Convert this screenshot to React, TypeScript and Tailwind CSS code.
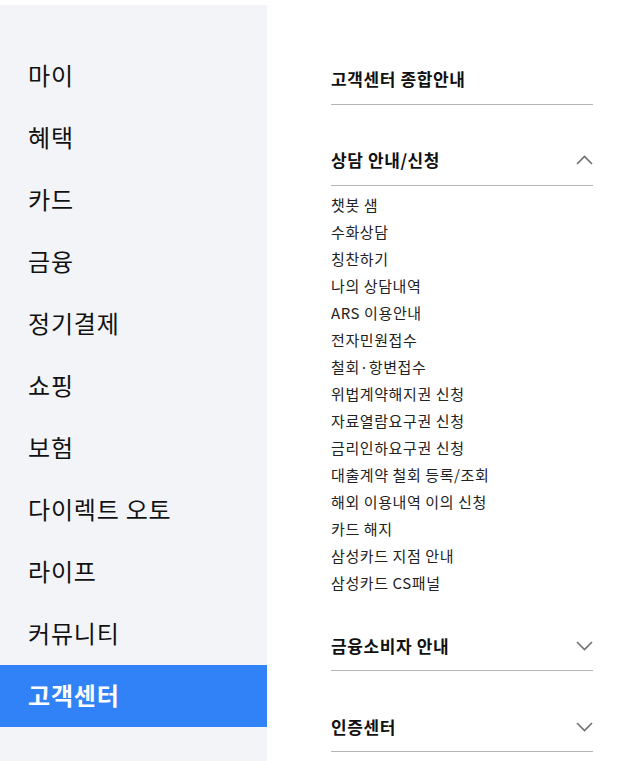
import React from "react";

const mainMenu = [
  "마이",
  "혜택",
  "카드",
  "금융",
  "정기결제",
  "쇼핑",
  "보험",
  "다이렉트 오토",
  "라이프",
  "커뮤니티",
  "고객센터",
];

const counselItems = [
  "챗봇 샘",
  "수화상담",
  "칭찬하기",
  "나의 상담내역",
  "ARS 이용안내",
  "전자민원접수",
  "철회·항변접수",
  "위법계약해지권 신청",
  "자료열람요구권 신청",
  "금리인하요구권 신청",
  "대출계약 철회 등록/조회",
  "해외 이용내역 이의 신청",
  "카드 해지",
  "삼성카드 지점 안내",
  "삼성카드 CS패널",
];

const Chevron = ({ up }: { up?: boolean }) => (
  <svg width="17" height="10" viewBox="0 0 17 10" fill="none">
    <path
      d={up ? "M1 9 L8.5 1.5 L16 9" : "M1 1 L8.5 8.5 L16 1"}
      stroke="#707070"
      strokeWidth="1.6"
    />
  </svg>
);

const App: React.FC = () => {
  const active = "고객센터";

  return (
    <div
      className="flex w-[617px] h-[761px] overflow-hidden bg-white text-[#111]"
      style={{ fontFamily: '"Noto Sans CJK KR", "Noto Sans", sans-serif' }}
    >
      {/* ── Left main menu ── */}
      <aside className="w-[267px] shrink-0 mt-[5px] bg-[#f2f4f8] pt-[40px] pb-[60px]">
        <ul>
          {mainMenu.map(m => (
            <li
              key={m}
              className={`h-[62px] flex items-center pl-[28px] pb-[2px] text-[24px] tracking-[0.8px] leading-none
                ${m === active ? "bg-[#3182f6] text-white font-bold" : "text-[#111]"}`}
            >
              {m}
            </li>
          ))}
        </ul>
      </aside>

      {/* ── Right sub menu ── */}
      <div className="w-[262px] ml-[64px] pt-[54px]">
        <div className="h-[51px] flex items-center border-b border-[#b5b5b5] text-[17px] font-bold tracking-[0.6px]">
          고객센터 종합안내
        </div>

        <div className="mt-[30px] h-[51px] flex items-center justify-between border-b border-[#b5b5b5] text-[17px] font-bold tracking-[0.6px]">
          <span>상담 안내/신청</span>
          <Chevron up />
        </div>
        <ul className="pt-[6px]">
          {counselItems.map(item => (
            <li key={item} className="h-[27px] flex items-center text-[15px] tracking-[0.6px] text-[#222]">
              {item}
            </li>
          ))}
        </ul>

        <div className="mt-[24px] h-[50px] flex items-center justify-between border-b border-[#b5b5b5] text-[17px] font-bold tracking-[0.6px]">
          <span>금융소비자 안내</span>
          <Chevron />
        </div>

        <div className="mt-[31px] h-[50px] flex items-center justify-between border-b border-[#b5b5b5] text-[17px] font-bold tracking-[0.6px]">
          <span>인증센터</span>
          <Chevron />
        </div>
      </div>
    </div>
  );
};

export default App;
